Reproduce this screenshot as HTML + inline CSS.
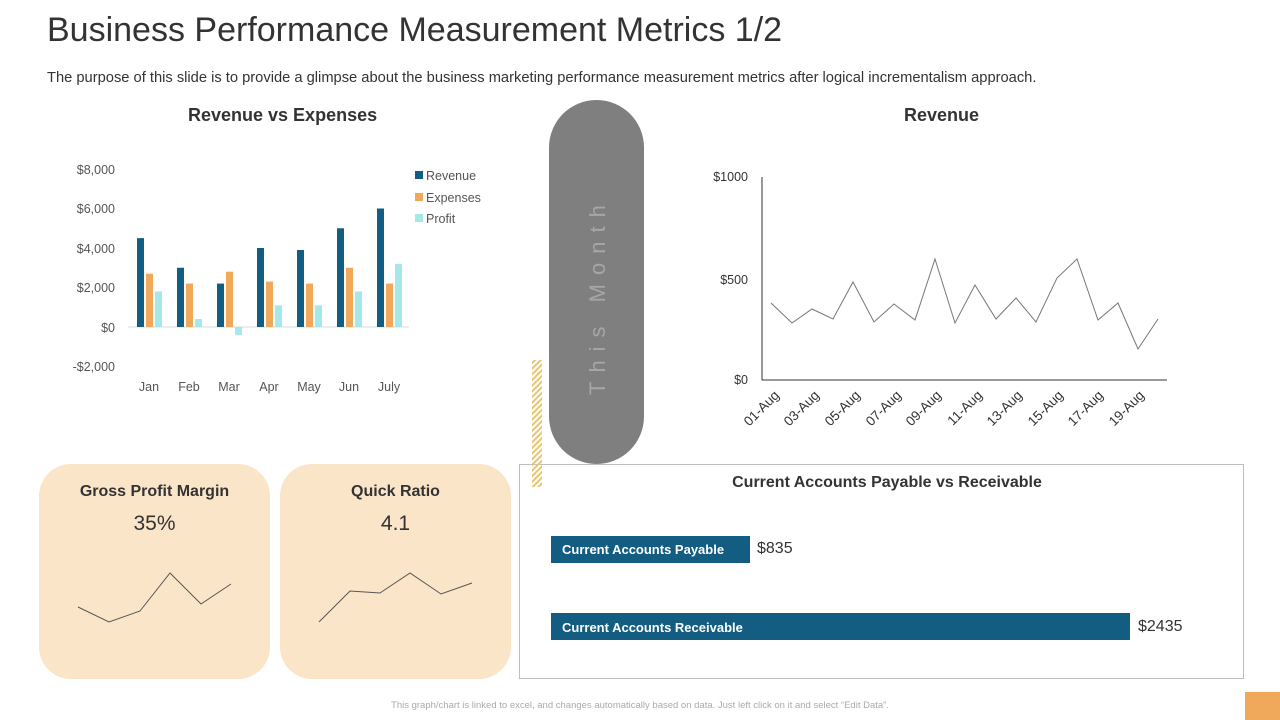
<!DOCTYPE html>
<html><head><meta charset="utf-8"><style>
body{margin:0;width:1280px;height:720px;background:#fff;position:relative;overflow:hidden;font-family:"Liberation Sans",sans-serif}
.a{position:absolute}
</style></head><body>
<div class="a" style="left:47px;top:11px;font-size:34px;color:#333">Business Performance Measurement Metrics 1/2</div>
<div class="a" style="left:47px;top:70px;font-size:14.7px;color:#333">The purpose of this slide is to provide a glimpse about the business marketing performance measurement metrics after logical incrementalism approach.</div>
<div class="a" style="left:188px;top:105px;font-size:18px;font-weight:bold;color:#333">Revenue vs Expenses</div>
<div class="a" style="left:904px;top:105px;font-size:18px;font-weight:bold;color:#333">Revenue</div>
<svg class="a" style="left:0;top:0" width="1280" height="720">
<g font-family="Liberation Sans" font-size="12.5" fill="#555" text-anchor="end">
<text x="115" y="174">$8,000</text><text x="115" y="213">$6,000</text><text x="115" y="253">$4,000</text><text x="115" y="292">$2,000</text><text x="115" y="332">$0</text><text x="115" y="371">-$2,000</text>
</g>
<line x1="128" y1="327" x2="409" y2="327" stroke="#d9d9d9"/>
<g id="bars"></g>
<g font-family="Liberation Sans" font-size="12.5" fill="#555" text-anchor="middle">
<text x="149" y="391">Jan</text><text x="189" y="391">Feb</text><text x="229" y="391">Mar</text><text x="269" y="391">Apr</text><text x="309" y="391">May</text><text x="349" y="391">Jun</text><text x="389" y="391">July</text>
</g>
<rect x="415" y="171" width="8" height="8" fill="#135d82"/><rect x="415" y="193" width="8" height="8" fill="#f0a95a"/><rect x="415" y="214" width="8" height="8" fill="#a5e8ea"/>
<g font-family="Liberation Sans" font-size="12.5" fill="#555"><text x="426" y="180">Revenue</text><text x="426" y="202">Expenses</text><text x="426" y="223">Profit</text></g>
<line x1="762" y1="177" x2="762" y2="380" stroke="#333"/>
<line x1="762" y1="380" x2="1167" y2="380" stroke="#333"/>
<g font-family="Liberation Sans" font-size="12.5" fill="#333" text-anchor="end"><text x="748" y="181">$1000</text><text x="748" y="284">$500</text><text x="748" y="384">$0</text></g>
<polyline fill="none" stroke="#777" stroke-width="1" points="771,303 792,323 812,309 833,319 853,282 874,322 894,304 915,320 935,259 955,323 975,285 996,319 1016,298 1036,322 1057,278 1077,259 1098,320 1118,303 1138,349 1158,319"/>
<g font-family="Liberation Sans" font-size="13.5" fill="#333" text-anchor="end">
<text transform="translate(780,396) rotate(-45)">01-Aug</text><text transform="translate(820,396) rotate(-45)">03-Aug</text><text transform="translate(861,396) rotate(-45)">05-Aug</text><text transform="translate(902,396) rotate(-45)">07-Aug</text><text transform="translate(942,396) rotate(-45)">09-Aug</text><text transform="translate(983,396) rotate(-45)">11-Aug</text><text transform="translate(1023,396) rotate(-45)">13-Aug</text><text transform="translate(1064,396) rotate(-45)">15-Aug</text><text transform="translate(1104,396) rotate(-45)">17-Aug</text><text transform="translate(1145,396) rotate(-45)">19-Aug</text>
</g>
<rect x="39" y="464" width="231" height="215" rx="32" fill="#fbe5c8"/>
<rect x="280" y="464" width="231" height="215" rx="32" fill="#fbe5c8"/>
<polyline fill="none" stroke="#555" points="78,607 109,622 140,611 170,573 201,604 231,584"/>
<polyline fill="none" stroke="#555" points="319,622 350,591 380,593 410,573 441,594 472,583"/>
<rect x="519.5" y="464.5" width="724" height="214" fill="#fff" stroke="#bfbfbf"/>
<defs><pattern id="st" width="4" height="4" patternUnits="userSpaceOnUse" patternTransform="rotate(45)"><rect width="2" height="4" fill="#e8c56e"/></pattern></defs>
<rect x="532" y="360" width="10" height="127" fill="url(#st)"/>
<rect x="549" y="100" width="95" height="364" rx="47.5" fill="#7f7f7f"/>
<text transform="translate(605,395) rotate(-90)" font-family="Liberation Sans" font-size="22" fill="#a6a6a6" letter-spacing="9">This Month</text>
<rect x="551" y="536" width="199" height="27" fill="#135d82"/>
<rect x="551" y="613" width="579" height="27" fill="#135d82"/>
<rect x="1245" y="692" width="35" height="28" fill="#f0a95a"/>
</svg>
<div class="a" style="left:39px;width:231px;top:483px;text-align:center;font-size:16px;font-weight:bold;color:#333">Gross Profit Margin</div>
<div class="a" style="left:39px;width:231px;top:512px;text-align:center;font-size:21px;color:#333">35%</div>
<div class="a" style="left:280px;width:231px;top:483px;text-align:center;font-size:16px;font-weight:bold;color:#333">Quick Ratio</div>
<div class="a" style="left:280px;width:231px;top:512px;text-align:center;font-size:21px;color:#333">4.1</div>
<div class="a" style="left:520px;width:734px;top:474px;text-align:center;font-size:16px;font-weight:bold;color:#333">Current Accounts Payable vs Receivable</div>
<div class="a" style="left:562px;top:542px;font-size:13px;font-weight:bold;color:#fff">Current Accounts Payable</div>
<div class="a" style="left:757px;top:540px;font-size:16px;color:#333">$835</div>
<div class="a" style="left:562px;top:620px;font-size:13px;font-weight:bold;color:#fff">Current Accounts Receivable</div>
<div class="a" style="left:1138px;top:618px;font-size:16px;color:#333">$2435</div>
<div class="a" style="left:0;width:1280px;top:700px;text-align:center;font-size:9.5px;color:#aaa">This graph/chart is linked to excel, and changes automatically based on data. Just left click on it and select “Edit Data”.</div>
<script>
var d=[[4500,2700,1800],[3000,2200,400],[2200,2800,-400],[4000,2300,1100],[3900,2200,1100],[5000,3000,1800],[6000,2200,3200]],c=["#135d82","#f0a95a","#a5e8ea"],s="";
d.forEach(function(g,i){g.forEach(function(v,j){var h=Math.abs(v)*0.01975,x=137+i*40+j*9,y=v>=0?327-h:327;s+='<rect x="'+x+'" y="'+y+'" width="7" height="'+h+'" fill="'+c[j]+'"/>';});});
document.getElementById("bars").innerHTML=s;
</script>
</body></html>
